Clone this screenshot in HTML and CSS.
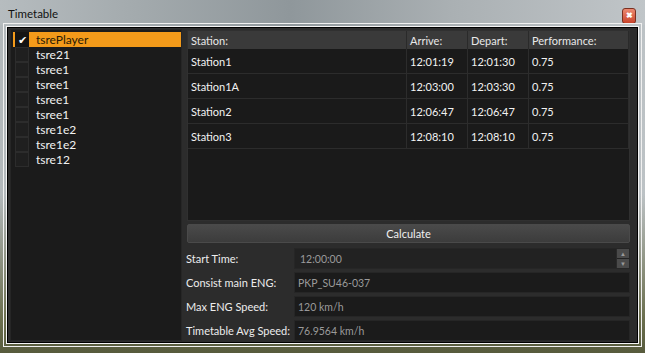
FILE: index.html
```html
<!DOCTYPE html>
<html lang="en">
<head>
    <meta charset="UTF-8">
    <title>Timetable</title>
    <link rel="stylesheet" href="styles.css">
</head>
<body>
    <div class="window">
        <div class="titlebar">
            <span class="title">Timetable</span>
            <button class="close">&#10006;</button>
        </div>
        <div class="frame">
            <div class="content">
                <ul class="consists">
                    <li class="selected"><span class="check">&#10004;</span>tsrePlayer</li>
                    <li><span class="check"></span>tsre21</li>
                    <li><span class="check"></span>tsree1</li>
                    <li><span class="check"></span>tsree1</li>
                    <li><span class="check"></span>tsree1</li>
                    <li><span class="check"></span>tsree1</li>
                    <li><span class="check"></span>tsre1e2</li>
                    <li><span class="check"></span>tsre1e2</li>
                    <li><span class="check"></span>tsre12</li>
                </ul>
                <div class="panel">
                    <div class="table-wrap">
                        <table class="stations">
                            <tr>
                                <th class="c-station">Station:</th>
                                <th class="c-time">Arrive:</th>
                                <th class="c-time">Depart:</th>
                                <th>Performance:</th>
                            </tr>
                            <tr><td>Station1</td><td>12:01:19</td><td>12:01:30</td><td>0.75</td></tr>
                            <tr><td>Station1A</td><td>12:03:00</td><td>12:03:30</td><td>0.75</td></tr>
                            <tr><td>Station2</td><td>12:06:47</td><td>12:06:47</td><td>0.75</td></tr>
                            <tr><td>Station3</td><td>12:08:10</td><td>12:08:10</td><td>0.75</td></tr>
                        </table>
                    </div>
                    <button class="calc">Calculate</button>
                    <div class="form">
                        <label>Start Time:</label>
                        <div class="field spin">
                            <span class="value indent">12:00:00</span>
                            <span class="arrows"><span>&#9650;</span><span>&#9660;</span></span>
                        </div>
                        <label>Consist main ENG:</label>
                        <div class="field"><span class="value">PKP_SU46-037</span></div>
                        <label>Max ENG Speed:</label>
                        <div class="field"><span class="value">120 km/h</span></div>
                        <label>Timetable Avg Speed:</label>
                        <div class="field"><span class="value">76.9564 km/h</span></div>
                    </div>
                </div>
            </div>
        </div>
    </div>
</body>
</html>
```

FILE: styles.css
```css
body {
    margin: 0;
    background: #5a5d3e;
    font-family: Lato, "Liberation Sans", sans-serif;
    font-size: 11px;
}

.window {
    width: 645px;
    height: 353px;
    background:
        linear-gradient(180deg, rgba(0, 0, 0, 0) 0%, rgba(0, 0, 0, 0) 55%, #6b6f4e 90%, #575b3c 100%),
        linear-gradient(90deg, #b3b9bc 0%, #a2a9ad 20%, #8f979b 45%, #a9afb2 70%, #bcc2c5 100%);
    display: flex;
    flex-direction: column;
    overflow: hidden;
}

.titlebar {
    height: 25px;
    display: flex;
    align-items: center;
    justify-content: space-between;
    padding: 0 9px 0 8px;
    flex-shrink: 0;
    background: linear-gradient(90deg, #b6bcbf 0%, #a4abae 20%, #8f979b 45%, #aab0b3 70%, #c0c5c8 100%);
}

.title {
    font-size: 11.5px;
    color: #111;
    padding-top: 2px;
}

.close {
    width: 14px;
    height: 16px;
    margin-top: 6px;
    padding: 0;
    border: 1px solid #7a3020;
    border-radius: 3px;
    background: linear-gradient(#ec8a72, #c9432a);
    color: #fff;
    font-size: 8px;
    font-weight: bold;
    line-height: 14px;
    text-align: center;
}

.frame {
    flex: 1;
    min-height: 0;
    margin: 1px 6px 9px 6px;
    border: 1px solid #f4f4f4;
    outline: 1px solid #f0f0f0;
    outline-offset: 2px;
    background: #000;
    padding: 1px;
    display: flex;
}

.content {
    flex: 1;
    background: #2c2c2c;
    display: flex;
    padding: 1px 7px 1px 2px;
    gap: 5px;
}

.consists {
    list-style: none;
    margin: 0;
    padding: 2px 0 0 2px;
    width: 168px;
    background: #1b1b1b;
    border: 1px solid #262626;
}

.consists li {
    height: 15px;
    display: flex;
    align-items: center;
    color: #f2f2f2;
    font-size: 12px;
}

.consists li.selected {
    background: #f39a1a;
    color: #2a1a05;
}

.check {
    flex-shrink: 0;
    width: 12px;
    height: 13px;
    margin: 0 7px 0 2px;
    background: #1f1f1f;
    border: 1px solid #2c2c2c;
    color: #fff;
    font-size: 11px;
    line-height: 13px;
    text-align: center;
}

.selected .check {
    background: #141414;
    border-color: #141414;
}

.panel {
    flex: 1;
    display: flex;
    flex-direction: column;
    padding-top: 1px;
}

.table-wrap {
    height: 190px;
    background: #1a1a1a;
    border: 1px solid #303030;
}

.stations {
    width: 100%;
    border-collapse: collapse;
    color: #f2f2f2;
    font-size: 11px;
}

.stations th {
    height: 18px;
    background: #3a3a3a;
    font-weight: normal;
    text-align: left;
    padding: 0 3px;
    border-right: 1px solid #2a2a2a;
    color: #e8e8e8;
}

.stations td {
    height: 24px;
    padding: 0 3px;
    border-right: 1px solid #2c2c2c;
    border-bottom: 1px solid #2c2c2c;
}

.stations .c-station {
    width: 212px;
}

.stations .c-time {
    width: 54px;
}

.calc {
    height: 19px;
    margin: 3px 0 5px;
    border: 1px solid #4a4a4a;
    border-radius: 2px;
    background: linear-gradient(#4a4a4a, #3c3c3c);
    color: #f0f0f0;
    font-family: inherit;
    font-size: 11px;
}

.form {
    display: grid;
    grid-template-columns: 107px 1fr;
    row-gap: 3px;
    align-items: center;
}

.form label {
    color: #ececec;
    font-size: 11px;
    margin-left: -1px;
    white-space: nowrap;
}

.field {
    height: 19px;
    background: #1b1b1b;
    border: 1px solid #262626;
    display: flex;
    align-items: center;
    color: #9a9a9a;
    font-size: 10.5px;
}

.value {
    padding-left: 3px;
}

.value.indent {
    padding-left: 5px;
    flex: 1;
}

.spin {
    background: #222;
}

.arrows {
    width: 12px;
    height: 19px;
    display: flex;
    flex-direction: column;
    gap: 1px;
    border-left: 1px solid #2a2a2a;
    color: #9a9a9a;
    font-size: 6px;
    text-align: center;
}

.arrows span {
    flex: 1;
    line-height: 9px;
    background: #4a4a4a;
}
```
